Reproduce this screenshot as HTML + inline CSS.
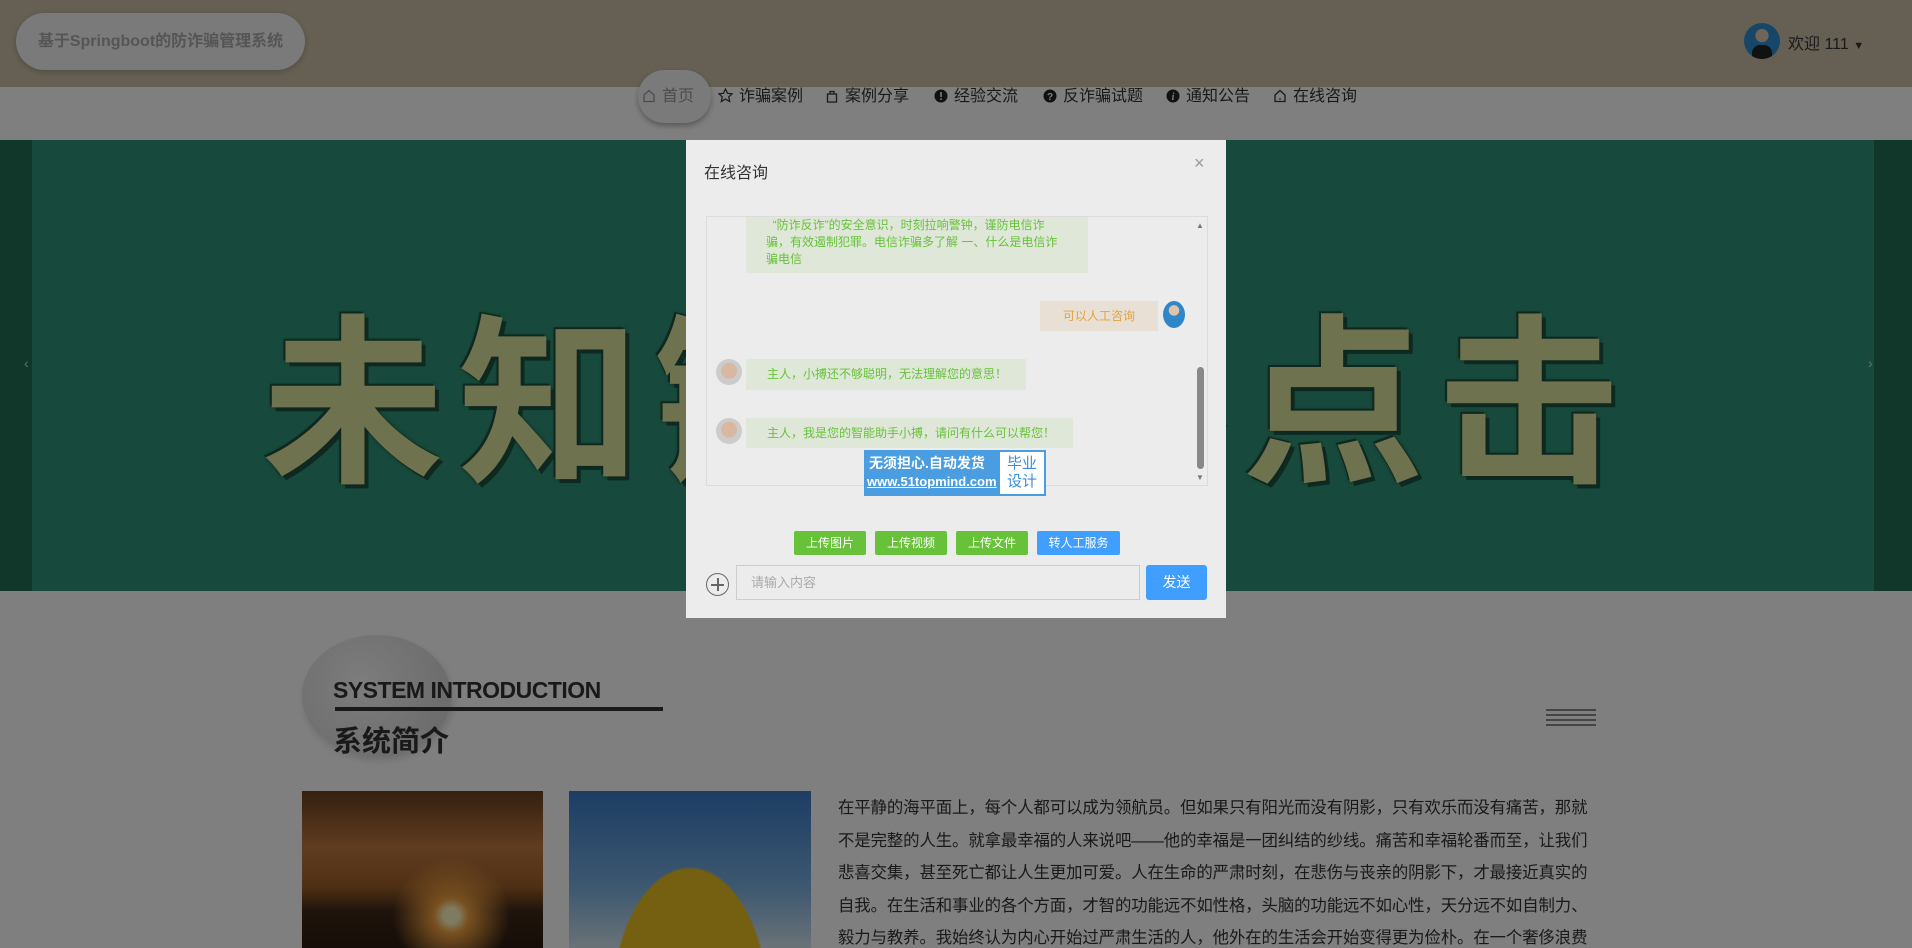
<!DOCTYPE html>
<html><head><meta charset="utf-8">
<style>
*{margin:0;padding:0;box-sizing:border-box}
html,body{width:1912px;height:948px;overflow:hidden}
body{background:#fff;font-family:"Liberation Sans","Noto Sans CJK SC",sans-serif;position:relative}
.abs{position:absolute}
#hdr{left:0;top:0;width:1912px;height:87px;background:#cbc0a6}
#title{left:16px;top:13px;width:289px;height:57px;border-radius:29px;background:#f4f4f4;box-shadow:0 2px 6px rgba(0,0,0,.2);font-size:16px;font-weight:bold;color:#aaa;line-height:57px;text-align:center}
#nav{left:0;top:87px;width:1912px;height:52px;background:#fff}
.ni{position:absolute;top:86px;font-size:16px;color:#333;line-height:22px;white-space:nowrap}
.ni svg{vertical-align:-2px;margin-right:6px}
#home{left:638px;top:70px;width:73px;height:53px;border-radius:28px;background:#f4f4f4;box-shadow:0 3px 6px rgba(0,0,0,.3)}
#banner{left:0;top:140px;width:1912px;height:451px;background:#2f9578;overflow:hidden}
.big{position:absolute;top:140px;left:262px;font-size:182px;font-weight:bold;color:#dfe59c;letter-spacing:14px;line-height:220px;white-space:nowrap;font-family:"Noto Sans CJK SC",sans-serif;text-shadow:0 0 4px #1a4a3a,4px 4px 0 #1e5442,-2px -2px 0 #1e5442}
#content{left:0;top:591px;width:1912px;height:357px;background:#fff;overflow:hidden}
#ov{left:0;top:0;width:1912px;height:948px;background:rgba(0,0,0,.5)}
#modal{left:686px;top:140px;width:540px;height:478px;background:#ececec}
.b{position:absolute;font-size:12px;line-height:17px}
.btn{position:absolute;height:24px;line-height:24px;color:#fff;font-size:12px;text-align:center;border-radius:2px}
.av{position:absolute;border-radius:50%}
</style></head><body>
<div id="hdr" class="abs"></div>
<div id="title" class="abs">基于Springboot的防诈骗管理系统</div>
<div class="abs" style="left:1744px;top:23px;width:36px;height:36px;border-radius:50%;background:radial-gradient(circle at 50% 35%,#e2c7b0 0 22%,#2f8fd0 23%);overflow:hidden"><div style="position:absolute;left:8px;top:22px;width:20px;height:16px;background:#222;border-radius:8px 8px 0 0"></div></div>
<div class="abs" style="left:1788px;top:30px;font-size:16px;color:#333">欢迎 111 <span style="font-size:11px">▼</span></div>
<div id="nav" class="abs"></div>
<div id="home" class="abs"></div>
<div class="ni" style="left:642px;color:#999"><svg width="14" height="14" viewBox="0 0 14 14"><path d="M2 6L7 1.5 12 6V12.5H2Z" fill="none" stroke="#999" stroke-width="1.3"/></svg>首页</div>
<div class="ni" style="left:718px"><svg width="15" height="15" viewBox="0 0 15 15"><path d="M7.5 1l2 4.3 4.6.5-3.4 3.1 1 4.6-4.2-2.4-4.2 2.4 1-4.6L.9 5.8l4.6-.5z" fill="none" stroke="#333" stroke-width="1.2"/></svg>诈骗案例</div>
<div class="ni" style="left:825px"><svg width="14" height="14" viewBox="0 0 14 14"><path d="M2.5 5h9v8h-9zM5 5V2.5h4V5" fill="none" stroke="#333" stroke-width="1.3"/></svg>案例分享</div>
<div class="ni" style="left:934px"><svg width="14" height="14" viewBox="0 0 14 14"><circle cx="7" cy="7" r="6.5" fill="#222"/><rect x="6.2" y="3" width="1.6" height="5" fill="#fff"/><rect x="6.2" y="9.3" width="1.6" height="1.6" fill="#fff"/></svg>经验交流</div>
<div class="ni" style="left:1043px"><svg width="14" height="14" viewBox="0 0 14 14"><circle cx="7" cy="7" r="6.5" fill="#222"/><text x="7" y="11" font-size="10" font-weight="bold" fill="#fff" text-anchor="middle" font-family="Liberation Sans">?</text></svg>反诈骗试题</div>
<div class="ni" style="left:1166px"><svg width="14" height="14" viewBox="0 0 14 14"><circle cx="7" cy="7" r="6.5" fill="#222"/><text x="7" y="11" font-size="10" font-weight="bold" font-style="italic" fill="#fff" text-anchor="middle" font-family="Liberation Serif">i</text></svg>通知公告</div>
<div class="ni" style="left:1273px"><svg width="14" height="14" viewBox="0 0 14 14"><path d="M2 6L7 1.5 12 6V12.5H2Z" fill="none" stroke="#333" stroke-width="1.3"/><path d="M6 10h2" stroke="#333"/></svg>在线咨询</div>

<div id="banner" class="abs">
  <div class="abs" style="left:0;top:0;width:32px;height:451px;background:#226e55"></div>
  <div class="abs" style="right:0;top:0;width:38px;height:451px;background:#226e55"></div>
  <div class="big">未知链接不点击</div>
  <div class="abs" style="left:24px;top:215px;color:#cde;font-size:14px">‹</div>
  <div class="abs" style="left:1868px;top:215px;color:#cde;font-size:14px">›</div>
</div>

<div id="content" class="abs">
  <div class="abs" style="left:302px;top:44px;width:149px;height:121px;border-radius:50%;background:radial-gradient(circle at 40% 40%,#fafafa,#d0d0d0);box-shadow:2px 4px 8px rgba(0,0,0,.15)"></div>
  <div class="abs" style="left:333px;top:86px;font-size:23px;font-weight:bold;color:#333;letter-spacing:-0.5px">SYSTEM INTRODUCTION</div>
  <div class="abs" style="left:335px;top:116px;width:328px;height:4px;background:#333"></div>
  <div class="abs" style="left:333px;top:127px;font-size:29px;font-weight:bold;color:#333">系统简介</div>
  <div class="abs" style="left:1546px;top:118px;width:50px;height:2px;background:#888;box-shadow:0 5px 0 #888,0 10px 0 #888,0 15px 0 #888"></div>
  <div class="abs" style="left:302px;top:200px;width:241px;height:160px;background:radial-gradient(circle at 62% 78%,#fff6c0 0 4%,#f0a040 9%,transparent 30%),linear-gradient(#6a4020,#c07a40 35%,#a0602a 60%,#402818 75%,#2a1a10)"></div>
  <div class="abs" style="left:569px;top:200px;width:242px;height:160px;background:radial-gradient(ellipse at 50% 135%,#e8c020 0 45%,transparent 46%),linear-gradient(#3a7ac8,#7ab0e0 60%,#d8e8f0)"></div>
  <div class="abs" style="left:838px;top:201px;width:770px;font-size:16.4px;line-height:32.5px;color:#333;letter-spacing:-0.1px">在平静的海平面上，每个人都可以成为领航员。但如果只有阳光而没有阴影，只有欢乐而没有痛苦，那就<br>不是完整的人生。就拿最幸福的人来说吧——他的幸福是一团纠结的纱线。痛苦和幸福轮番而至，让我们<br>悲喜交集，甚至死亡都让人生更加可爱。人在生命的严肃时刻，在悲伤与丧亲的阴影下，才最接近真实的<br>自我。在生活和事业的各个方面，才智的功能远不如性格，头脑的功能远不如心性，天分远不如自制力、<br>毅力与教养。我始终认为内心开始过严肃生活的人，他外在的生活会开始变得更为俭朴。在一个奢侈浪费</div>
</div>

<div id="ov" class="abs"></div>

<div id="modal" class="abs">
  <div class="abs" style="left:18px;top:19px;font-size:16px;color:#333">在线咨询</div>
  <div class="abs" style="left:508px;top:13px;font-size:18px;color:#999">×</div>
  <div class="abs" style="left:20px;top:76px;width:502px;height:270px;border:1px solid #dcdcdc;overflow:hidden">
    <div class="b" style="left:39px;top:0;width:342px;height:56px;background:#dfe7d9;color:#67c23a;padding:0 20px;line-height:17px">&nbsp;&nbsp;“防诈反诈”的安全意识，时刻拉响警钟，谨防电信诈骗，有效遏制犯罪。电信诈骗多了解 一、什么是电信诈骗电信</div>
    <div class="b" style="left:333px;top:84px;width:118px;height:30px;line-height:30px;background:#e8e0d4;color:#e6a23c;text-align:center">可以人工咨询</div>
    <div class="av" style="left:456px;top:84px;width:22px;height:27px;background:radial-gradient(circle at 50% 35%,#e0c4a8 0 25%,#2f86c8 26%)"></div>
    <div class="av" style="left:9px;top:142px;width:26px;height:26px;background:radial-gradient(circle at 50% 45%,#d8b8a0 0 40%,#ccc 42%)"></div>
    <div class="b" style="left:39px;top:142px;width:280px;height:31px;line-height:31px;background:#dfe7d9;color:#67c23a;padding-left:21px">主人，小搏还不够聪明，无法理解您的意思！</div>
    <div class="av" style="left:9px;top:201px;width:26px;height:26px;background:radial-gradient(circle at 50% 45%,#d8b8a0 0 40%,#ccc 42%)"></div>
    <div class="b" style="left:39px;top:201px;width:327px;height:30px;line-height:30px;background:#dfe7d9;color:#67c23a;padding-left:21px">主人，我是您的智能助手小搏，请问有什么可以帮您！</div>
    <div class="abs" style="left:489px;top:4px;font-size:8px;color:#777">▲</div>
    <div class="abs" style="left:490px;top:150px;width:7px;height:102px;background:#888;border-radius:4px"></div>
    <div class="abs" style="left:489px;top:256px;font-size:8px;color:#777">▼</div>
  </div>
  <div class="abs" style="left:178px;top:310px;width:182px;height:46px;background:#4a9de0"></div>
  <div class="abs" style="left:183px;top:313px;font-size:14px;font-weight:bold;color:#fff">无须担心.自动发货</div>
  <div class="abs" style="left:181px;top:334px;font-size:13px;font-weight:bold;color:#fff;text-decoration:underline">www.51topmind.com</div>
  <div class="abs" style="left:314px;top:312px;width:44px;height:42px;background:#fff;color:#3a8fd8;font-size:15px;line-height:18px;text-align:center;padding-top:3px">毕业<br>设计</div>
  <div class="btn" style="left:108px;width:72px;top:391px;background:#67c23a">上传图片</div>
  <div class="btn" style="left:189px;width:72px;top:391px;background:#67c23a">上传视频</div>
  <div class="btn" style="left:270px;width:72px;top:391px;background:#67c23a">上传文件</div>
  <div class="btn" style="left:351px;width:83px;top:391px;background:#409eff">转人工服务</div>
  <div class="abs" style="left:20px;top:433px;width:23px;height:23px;border:1.5px solid #666;border-radius:50%"></div>
  <div class="abs" style="left:25px;top:444px;width:13px;height:1.5px;background:#666"></div>
  <div class="abs" style="left:31px;top:438px;width:1.5px;height:13px;background:#666"></div>
  <div class="abs" style="left:50px;top:425px;width:404px;height:35px;border:1px solid #ccc;background:#ececec;font-size:13px;color:#aaa;line-height:33px;padding-left:14px">请输入内容</div>
  <div class="abs" style="left:460px;top:425px;width:61px;height:35px;background:#409eff;color:#fff;font-size:14px;line-height:35px;text-align:center;border-radius:3px">发送</div>
</div>
</body></html>
